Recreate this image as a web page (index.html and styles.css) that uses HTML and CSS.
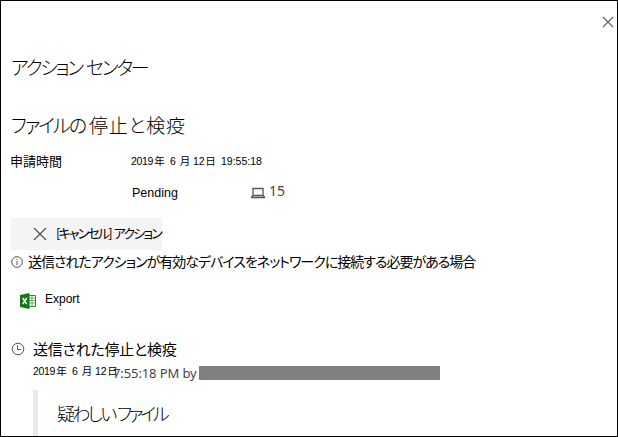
FILE: index.html
```html
<!DOCTYPE html>
<html lang="ja">
<head>
<meta charset="utf-8">
<title>アクション センター</title>
<link rel="stylesheet" href="styles.css">
</head>
<body>
<main class="panel">
  <header class="topbar">
    <svg class="close" viewBox="0 0 12 12"><path d="M1 1l10 10M11 1L1 11"/></svg>
  </header>
  <h1 class="title"><span class="action">アクション</span><span class="center">センター</span></h1>
  <h2 class="heading"><span class="file">ファイルの</span><span class="kanji">停止と検疫</span></h2>
  <div class="row submitted"><span class="label">申請時間</span><span class="date"><span>2019<b>年</b></span><span>6 <b>月</b></span><span>12<b>日</b></span><span>19:55:18</span></span></div>
  <div class="row status">
    <span class="pending">Pending</span>
    <svg class="laptop" viewBox="0 0 16 12"><path d="M3 1.5h10v7H3zM1 10.5h14M3 8.5l-2 2M13 8.5l2 2"/></svg>
    <span class="count">15</span>
  </div>
  <div class="cancel">
    <svg class="x" viewBox="0 0 14 14"><path d="M1 1l12 12M13 1L1 13"/></svg>
    <span class="cancel-text">[キャンセル] アクション</span>
  </div>
  <div class="row note">
    <svg class="info" viewBox="0 0 12 12"><circle cx="6" cy="6" r="5.3"/><path d="M6 5v4M6 3v1"/></svg>
    <span class="note-text">送信されたアクションが有効なデバイスをネットワークに接続する必要がある場合</span>
  </div>
  <div class="row export">
    <svg class="excel" viewBox="0 0 16 16"><path class="sheet" d="M8 2.5h7.5v11H8z"/><path class="cells" d="M9 5h6M9 7.5h6M9 10h6M12 3v10"/><path class="cover" d="M0 2L9.5 0v16L0 14z"/><path class="mark" d="M2.7 5l4 6M6.7 5l-4 6"/></svg>
    <span class="export-text">Export</span>
    <i class="speck"></i>
  </div>
  <div class="row event">
    <svg class="clock" viewBox="0 0 14 14"><circle cx="7" cy="7" r="5.8"/><path d="M6.5 3.5v4h3.5"/></svg>
    <span class="event-text">送信された停止と検疫</span>
  </div>
  <div class="row stamp">
    <span class="date small"><span>2019<b>年</b></span><span>6 <b>月</b></span><span>12<b>日</b></span></span>
    <span class="time">7:55:18 PM by</span>
    <span class="redacted"></span>
  </div>
  <div class="comment"><span class="suspicious">疑わしい</span><span class="file-short">ファイル</span></div>
</main>
</body>
</html>
```
FILE: styles.css
```css
* { box-sizing: border-box; }
body { margin: 0; background: #fff; color: #000; font-family: "Liberation Sans", "Noto Sans CJK JP", sans-serif; }
.panel { width: 618px; height: 437px; border: 1px solid #000; padding-left: 10px; display: flex; flex-direction: column; overflow: hidden; }
.panel > * { flex: none; white-space: nowrap; }
svg { fill: none; stroke: #555; stroke-width: 1; flex: none; display: block; }
.topbar { height: 49px; display: flex; justify-content: flex-end; padding: 15px 3px 0 0; }
.close { width: 12px; height: 12px; stroke: #666; stroke-width: 1.3; }
.title, .heading, .comment, .label, .cancel-text, .note-text, .event-text { font-family: "Noto Sans CJK JP", sans-serif; font-weight: 300; font-feature-settings: "palt"; }
.title, .heading { margin: 0; font-size: 19px; display: flex; }
.title { height: 34px; line-height: 33px; }
.action { width: 75px; letter-spacing: -2.3px; }
.center { letter-spacing: -2.2px; }
.heading { height: 34px; line-height: 34px; margin-top: 24px; }
.file { width: 78px; letter-spacing: -2px; }
.kanji { letter-spacing: .8px; }
.row { display: flex; align-items: center; }
.submitted { height: 34px; margin-top: 2px; }
.label { width: 120px; font-size: 13px; margin-top: -2px; margin-left: -1px; }
.label, .note-text, .event-text, .cancel-text { font-weight: 400; }
.submitted .date { margin-left: 1px; }
.date { display: flex; align-items: baseline; font-size: 10.5px; line-height: 16px; }
.date > span { flex: none; }
.date > span:nth-child(1) { width: 39px; letter-spacing: -.3px; }
.date > span:nth-child(2) { width: 23px; }
.date > span:nth-child(3) { width: 28px; letter-spacing: -.2px; }
.date b { font-family: "Noto Sans CJK JP", sans-serif; font-weight: 400; margin-left: 1px; }
.status { height: 30px; padding-left: 121px; }
.pending { width: 118px; font-size: 12.5px; }
.laptop { width: 16px; height: 12px; stroke-width: 1.3; margin-top: -1px; }
.count { font: 14px/20px "Noto Sans", sans-serif; color: #444; margin: -5px 0 0 3px; }
.cancel { width: 151px; height: 32px; margin-top: 10px; padding-left: 22px; background: #f4f4f4; display: flex; align-items: center; }
.x { width: 14px; height: 14px; margin-right: 9px; stroke-width: 1.3; }
.cancel-text { font-size: 13px; letter-spacing: -1.85px; word-spacing: 2px; margin-top: -4px; }
.note { height: 24px; }
.info { width: 12px; height: 12px; margin-right: 5px; }
.note-text { font-size: 14px; letter-spacing: -1px; margin-top: -2px; }
.export { height: 50px; padding-left: 9px; position: relative; }
.excel { width: 16px; height: 16px; margin: 3px 9px 0 0; }
.excel .sheet { fill: #fff; stroke: #2b8a2b; }
.excel .cells { stroke: #6aae6a; }
.excel .cover { fill: #107c10; stroke: none; }
.excel .mark { stroke: #fff; stroke-width: 1.4; }
.export-text { font-size: 12px; }
.speck { position: absolute; left: 48px; top: 35px; width: 2px; height: 1px; background: #888; }
.event { height: 26px; margin-top: 12px; }
.clock { width: 14px; height: 14px; margin-right: 8px; }
.event-text { font-size: 15px; letter-spacing: -.25px; margin-top: -1px; }
.stamp { height: 22px; padding-left: 22px; }
.small { width: 80px; flex: none; margin-top: -5px; }
.time { width: 86px; flex: none; font: 13px/20px "Noto Sans", sans-serif; letter-spacing: -.1px; color: #444; }
.redacted { width: 241px; height: 14px; background: #808080; }
.comment { display: flex; height: 47px; margin: 6px 0 0 22px; padding-left: 19px; border-left: 5px solid #eaeaea; font-size: 18px; line-height: 46px; }
.suspicious { width: 60px; letter-spacing: -2.7px; }
.file-short { letter-spacing: -3.2px; }
```
